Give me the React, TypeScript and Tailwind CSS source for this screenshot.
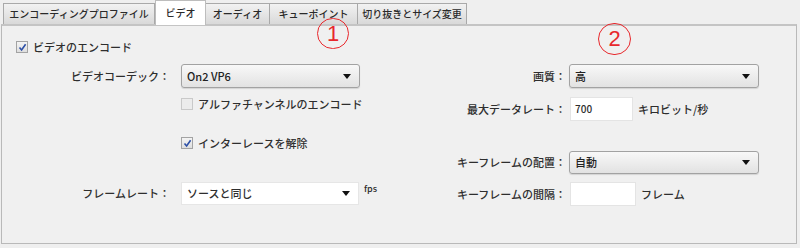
import React from "react";

const Arrow = () => (
  <svg width="8" height="5" viewBox="0 0 8 5" className="shrink-0">
    <path d="M0 0 L8 0 L4 5 Z" fill="#111" />
  </svg>
);

const Check = ({ checked, disabled }: { checked?: boolean; disabled?: boolean }) => (
  <span
    className={
      "inline-flex items-center justify-center w-[12px] h-[12px] shrink-0 border " +
      (disabled
        ? "border-[#c9c9c9] bg-[#ececec]"
        : "border-[#a3a3a3] bg-gradient-to-b from-[#f4f4f4] to-[#dedede]")
    }
  >
    {checked && (
      <svg width="9" height="9" viewBox="0 0 9 9">
        <path d="M1.5 4.5 L3.6 7 L7.6 1.2" stroke="#2c4fa6" strokeWidth="1.6" fill="none" />
      </svg>
    )}
  </span>
);

const Select = ({ text, w, h }: { text: string; w: string; h: string }) => (
  <div
    className={
      "flex items-center justify-between rounded-[3px] border border-[#a2a2a2] bg-gradient-to-b from-[#f8f8f8] to-[#e2e2e2] pl-[5px] pr-[8px] shadow-[0_1px_1px_rgba(0,0,0,0.12)] " +
      w +
      " " +
      h
    }
  >
    <span className="text-[11px] leading-none text-[#222]">{text}</span>
    <Arrow />
  </div>
);

const Tab = ({ label, w, active }: { label: string; w: string; active?: boolean }) => (
  <div
    className={
      "flex items-center justify-center border border-b-0 text-[10px] leading-none text-[#2a2a2a] " +
      w +
      " " +
      (active
        ? "h-[25px] bg-white border-[#bdbdbd] -mb-px z-10 relative"
        : "h-[21px] border-[#a9a9a9] bg-gradient-to-b from-[#f2f2f2] to-[#d9d9d9] -ml-px first:ml-0")
    }
  >
    {label}
  </div>
);

export default function App() {
  return (
    <div className="relative w-[800px] h-[248px] overflow-hidden bg-[#efefef] [font-family:'Noto_Sans_CJK_JP','Noto_Sans',sans-serif] font-medium text-[#2e2e2e]">
      <div className="flex items-end h-[24px] pl-[3px]">
        <Tab label="エンコーディングプロファイル" w="w-[152px]" />
        <Tab label="ビデオ" w="w-[51px]" active />
        <Tab label="オーディオ" w="w-[65px]" />
        <Tab label="キューポイント" w="w-[89px]" />
        <Tab label="切り抜きとサイズ変更" w="w-[110px]" />
      </div>
      <div className="ml-[1px] w-[796px] h-[220px] border border-[#b9b9b9] border-t-2 border-t-[#c4c4c4] bg-[#f0f0f0] pt-[14px]">
        <div className="flex items-center gap-[5px] pl-[14px] h-[14px]">
          <Check checked />
          <span className="text-[11px] leading-none">ビデオのエンコード</span>
        </div>
        <div className="flex">
          {/* left column */}
          <div className="w-[398px] flex flex-col">
            <div className="mt-[10px] flex items-center">
              <span className="w-[168px] text-right text-[11px] leading-none">ビデオコーデック：</span>
              <div className="ml-[11px]">
                <Select text="On2 VP6" w="w-[179px]" h="h-[24px]" />
              </div>
            </div>
            <div className="mt-[9px] ml-[179px] flex items-center gap-[5px] h-[14px]">
              <Check disabled />
              <span className="text-[11px] leading-none">アルファチャンネルのエンコード</span>
            </div>
            <div className="mt-[25px] ml-[179px] flex items-center gap-[5px] h-[14px]">
              <Check checked />
              <span className="text-[11px] leading-none">インターレースを解除</span>
            </div>
            <div className="mt-[32px] flex items-center">
              <span className="w-[168px] text-right text-[11px] leading-none">フレームレート：</span>
              <div className="ml-[11px] flex items-center justify-between w-[178px] h-[23px] bg-white border border-[#e6e6e6] pl-[5px] pr-[8px]">
                <span className="text-[11px] leading-none">ソースと同じ</span>
                <Arrow />
              </div>
              <span className="ml-[5px] self-start mt-[2px] text-[9px] leading-none">fps</span>
            </div>
          </div>
          {/* right column */}
          <div className="flex flex-col">
            <div className="mt-[10px] flex items-center">
              <span className="w-[166px] text-right text-[11px] leading-none">画質：</span>
              <div className="ml-[3px]">
                <Select text="高" w="w-[190px]" h="h-[24px]" />
              </div>
            </div>
            <div className="mt-[9px] flex items-center">
              <span className="w-[166px] text-right text-[11px] leading-none">最大データレート：</span>
              <div className="ml-[4px] w-[63px] h-[24px] bg-white border border-[#e4e4e4] flex items-center pl-[4px]">
                <span className="text-[10px] leading-none">700</span>
              </div>
              <span className="ml-[5px] text-[11px] leading-none">キロビット/秒</span>
            </div>
            <div className="mt-[30px] flex items-center">
              <span className="w-[166px] text-right text-[11px] leading-none">キーフレームの配置：</span>
              <div className="ml-[3px]">
                <Select text="自動" w="w-[190px]" h="h-[23px]" />
              </div>
            </div>
            <div className="mt-[8px] flex items-center">
              <span className="w-[166px] text-right text-[11px] leading-none">キーフレームの間隔：</span>
              <div className="ml-[4px] w-[66px] h-[24px] bg-white border border-[#e4e4e4]" />
              <span className="ml-[5px] text-[11px] leading-none">フレーム</span>
            </div>
          </div>
        </div>
      </div>
      {/* annotations */}
      <div className="absolute left-[317px] top-[18px] w-[32px] h-[31px] rounded-full border-[1.5px] border-[#e8282c] flex items-center justify-center text-[#e8282c] text-[22px] font-normal leading-none [font-family:'Liberation_Sans',sans-serif]">
        1
      </div>
      <div className="absolute left-[598px] top-[23px] w-[33px] h-[32px] rounded-full border-[1.5px] border-[#e8282c] flex items-center justify-center text-[#e8282c] text-[22px] font-normal leading-none [font-family:'Liberation_Sans',sans-serif]">
        2
      </div>
    </div>
  );
}
